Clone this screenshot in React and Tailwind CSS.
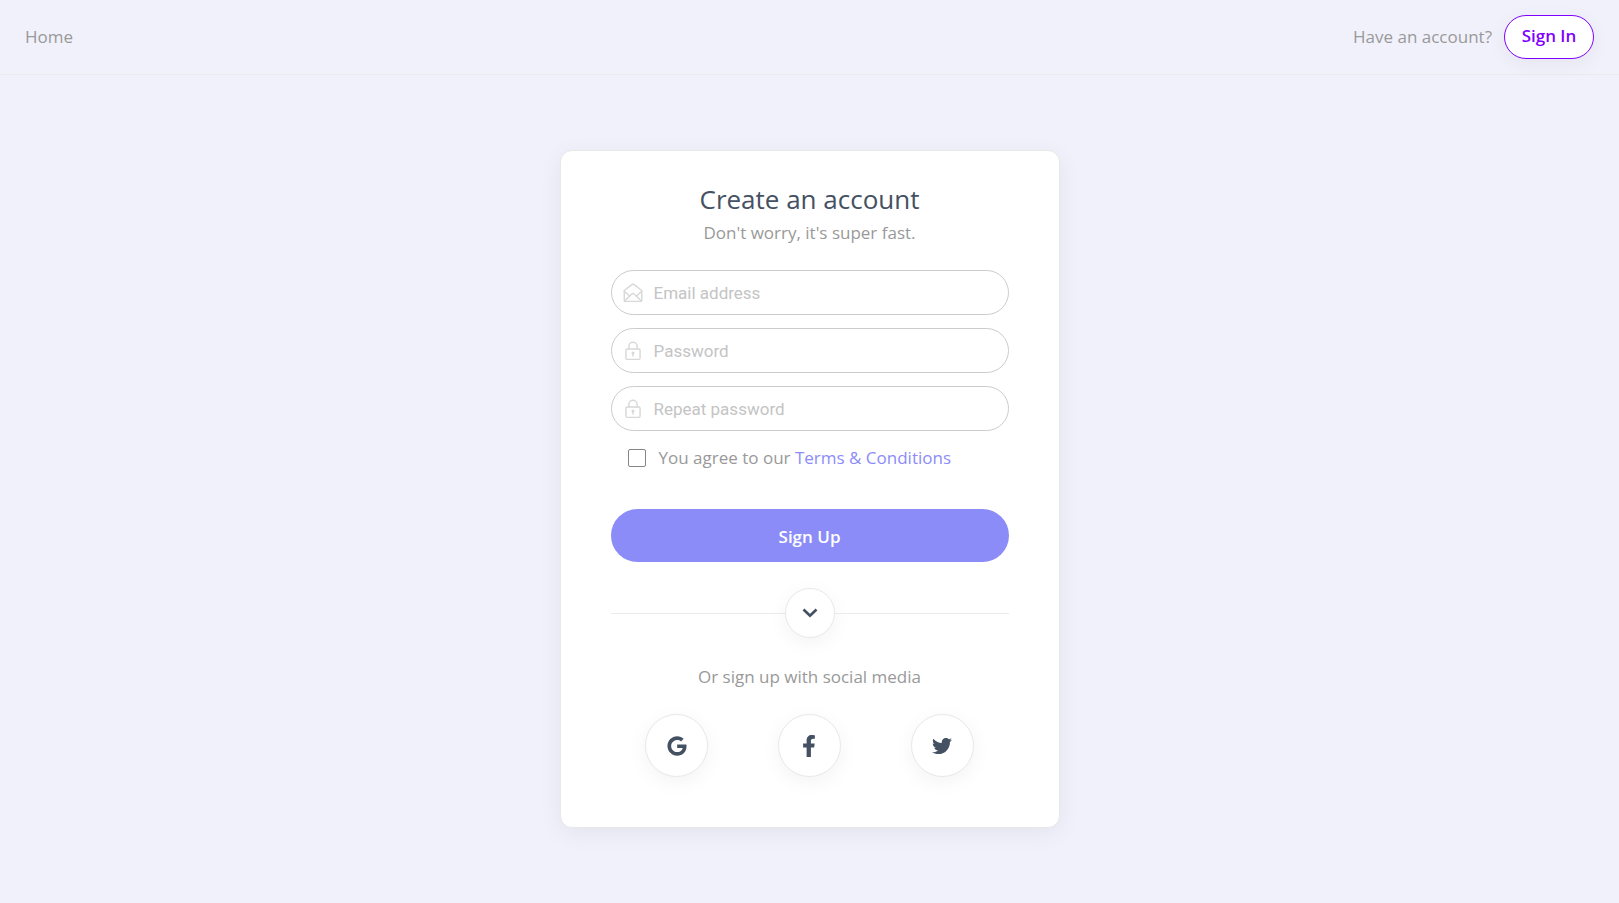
import { FaFacebookF, FaGoogle, FaTwitter } from "react-icons/fa";

const SOCIALS = [
  { name: "Google", Icon: FaGoogle, size: "size-5" },
  { name: "Facebook", Icon: FaFacebookF, size: "size-[22px]" },
  { name: "Twitter", Icon: FaTwitter, size: "size-5" },
];

function MailIcon() {
  return (
    <svg
      viewBox="0 0 24 24"
      className="size-5"
      fill="none"
      stroke="currentColor"
      strokeWidth="1.7"
      strokeLinejoin="round"
      strokeLinecap="round"
      aria-hidden
    >
      <path d="M1.500 9 11 1.600a1.600 1.600 0 0 1 2 0L22.500 9v12a1 1 0 0 1-1 1h-19a1 1 0 0 1-1-1z" />
      <path d="m1.500 10 6.300 5.500M22.500 10l-6.300 5.500" />
      <path d="m1.900 21.500 8.700-8.300a2.100 2.100 0 0 1 2.800 0l8.700 8.300" />
    </svg>
  );
}

function LockIcon() {
  return (
    <svg
      viewBox="0 0 24 24"
      className="size-5"
      fill="none"
      stroke="currentColor"
      strokeWidth="1.7"
      strokeLinecap="round"
      aria-hidden
    >
      <rect x="3.500" y="9.500" width="17" height="12.500" rx="1.500" />
      <path d="M7 9.500V6.500a5 5 0 0 1 10 0v3" />
      <circle cx="12" cy="14.400" r="1" fill="currentColor" />
      <path d="M12 15v3" />
    </svg>
  );
}

function Field({ label, type, Icon }) {
  return (
    <div className="flex h-[45px] items-center rounded-full border border-[#cccccc] bg-white pl-[11px] text-[#d8d8d8]">
      <Icon />
      <input
        type={type}
        aria-label={label}
        placeholder={label}
        className="ml-[11px] h-full min-w-0 flex-1 rounded-r-full bg-transparent font-[Roboto,sans-serif] text-[17px] text-[#4a5568] outline-none placeholder:text-[#c4c4c4]"
      />
    </div>
  );
}

export default function App() {
  return (
    <div className="min-h-screen bg-[#f1f1fb] font-['Open_Sans','Noto_Sans',sans-serif] text-[17px] leading-6 text-[#999999]">
      <nav className="flex h-[75px] items-center justify-between border-b border-[#ebebee] px-[25px]">
        <a href="#home">Home</a>
        <div className="flex items-center gap-3">
          <span>Have an account?</span>
          <a
            href="#signin"
            className="flex h-11 w-[90px] items-center justify-center rounded-full border border-[#7f00ff] bg-white pb-[2px] font-semibold text-[#7f00ff] shadow-[0_5px_20px_rgba(0,0,0,0.05)]"
          >
            Sign In
          </a>
        </div>
      </nav>

      <main className="mx-auto mt-[75px] w-full max-w-[500px] rounded-xl border border-[#e8e8e8] bg-white px-[50px] pt-[30px] pb-[50px] shadow-[0_5px_25px_rgba(0,0,0,0.06)]">
        <h1 className="mb-1 text-center text-[26px] leading-9 text-[#445162]">Create an account</h1>
        <p className="text-center">Don't worry, it's super fast.</p>

        <form className="mt-[25px]" onSubmit={(e) => e.preventDefault()}>
          <div className="flex flex-col gap-[13px]">
            <Field label="Email address" type="email" Icon={MailIcon} />
            <Field label="Password" type="password" Icon={LockIcon} />
            <Field label="Repeat password" type="password" Icon={LockIcon} />
          </div>

          <div className="mt-[15px] flex items-center gap-[13px] pl-[17px]">
            <input
              id="terms"
              type="checkbox"
              className="size-[18px] appearance-none rounded-xs border border-[#858585] bg-white checked:bg-[#8c8cf9]"
            />
            <label htmlFor="terms">
              You agree to our{" "}
              <a href="#terms" className="text-[#8c8cf9]">
                Terms &amp; Conditions
              </a>
            </label>
          </div>

          <button
            type="submit"
            className="mt-[39px] h-[53px] w-full cursor-pointer rounded-full bg-[#8c8cf9] pt-[2px] font-semibold text-white"
          >
            Sign Up
          </button>
        </form>

        <div className="mt-[26px] flex items-center">
          <div className="h-px flex-1 bg-[#ebebeb]" />
          <button
            type="button"
            aria-label="More options"
            className="flex size-[50px] items-center justify-center rounded-full border border-[#e8e8e8] bg-white text-[#445162] shadow-[0_5px_20px_rgba(0,0,0,0.05)]"
          >
            <svg viewBox="0 0 16 10" className="h-[10px] w-4" fill="none" stroke="currentColor" strokeWidth="2.700" aria-hidden>
              <path d="m1.500 1.500 6.500 6.200 6.500-6.200" />
            </svg>
          </button>
          <div className="h-px flex-1 bg-[#ebebeb]" />
        </div>

        <p className="mt-[27px] text-center">Or sign up with social media</p>
        <div className="mt-[25px] grid grid-cols-3 justify-items-center">
          {SOCIALS.map(({ name, Icon, size }) => (
            <button
              key={name}
              type="button"
              aria-label={`Sign up with ${name}`}
              className="flex size-[63px] items-center justify-center rounded-full border border-[#e8e8e8] bg-white text-[#445162] shadow-[0_5px_20px_rgba(0,0,0,0.05)]"
            >
              <Icon className={size} />
            </button>
          ))}
        </div>
      </main>
    </div>
  );
}
